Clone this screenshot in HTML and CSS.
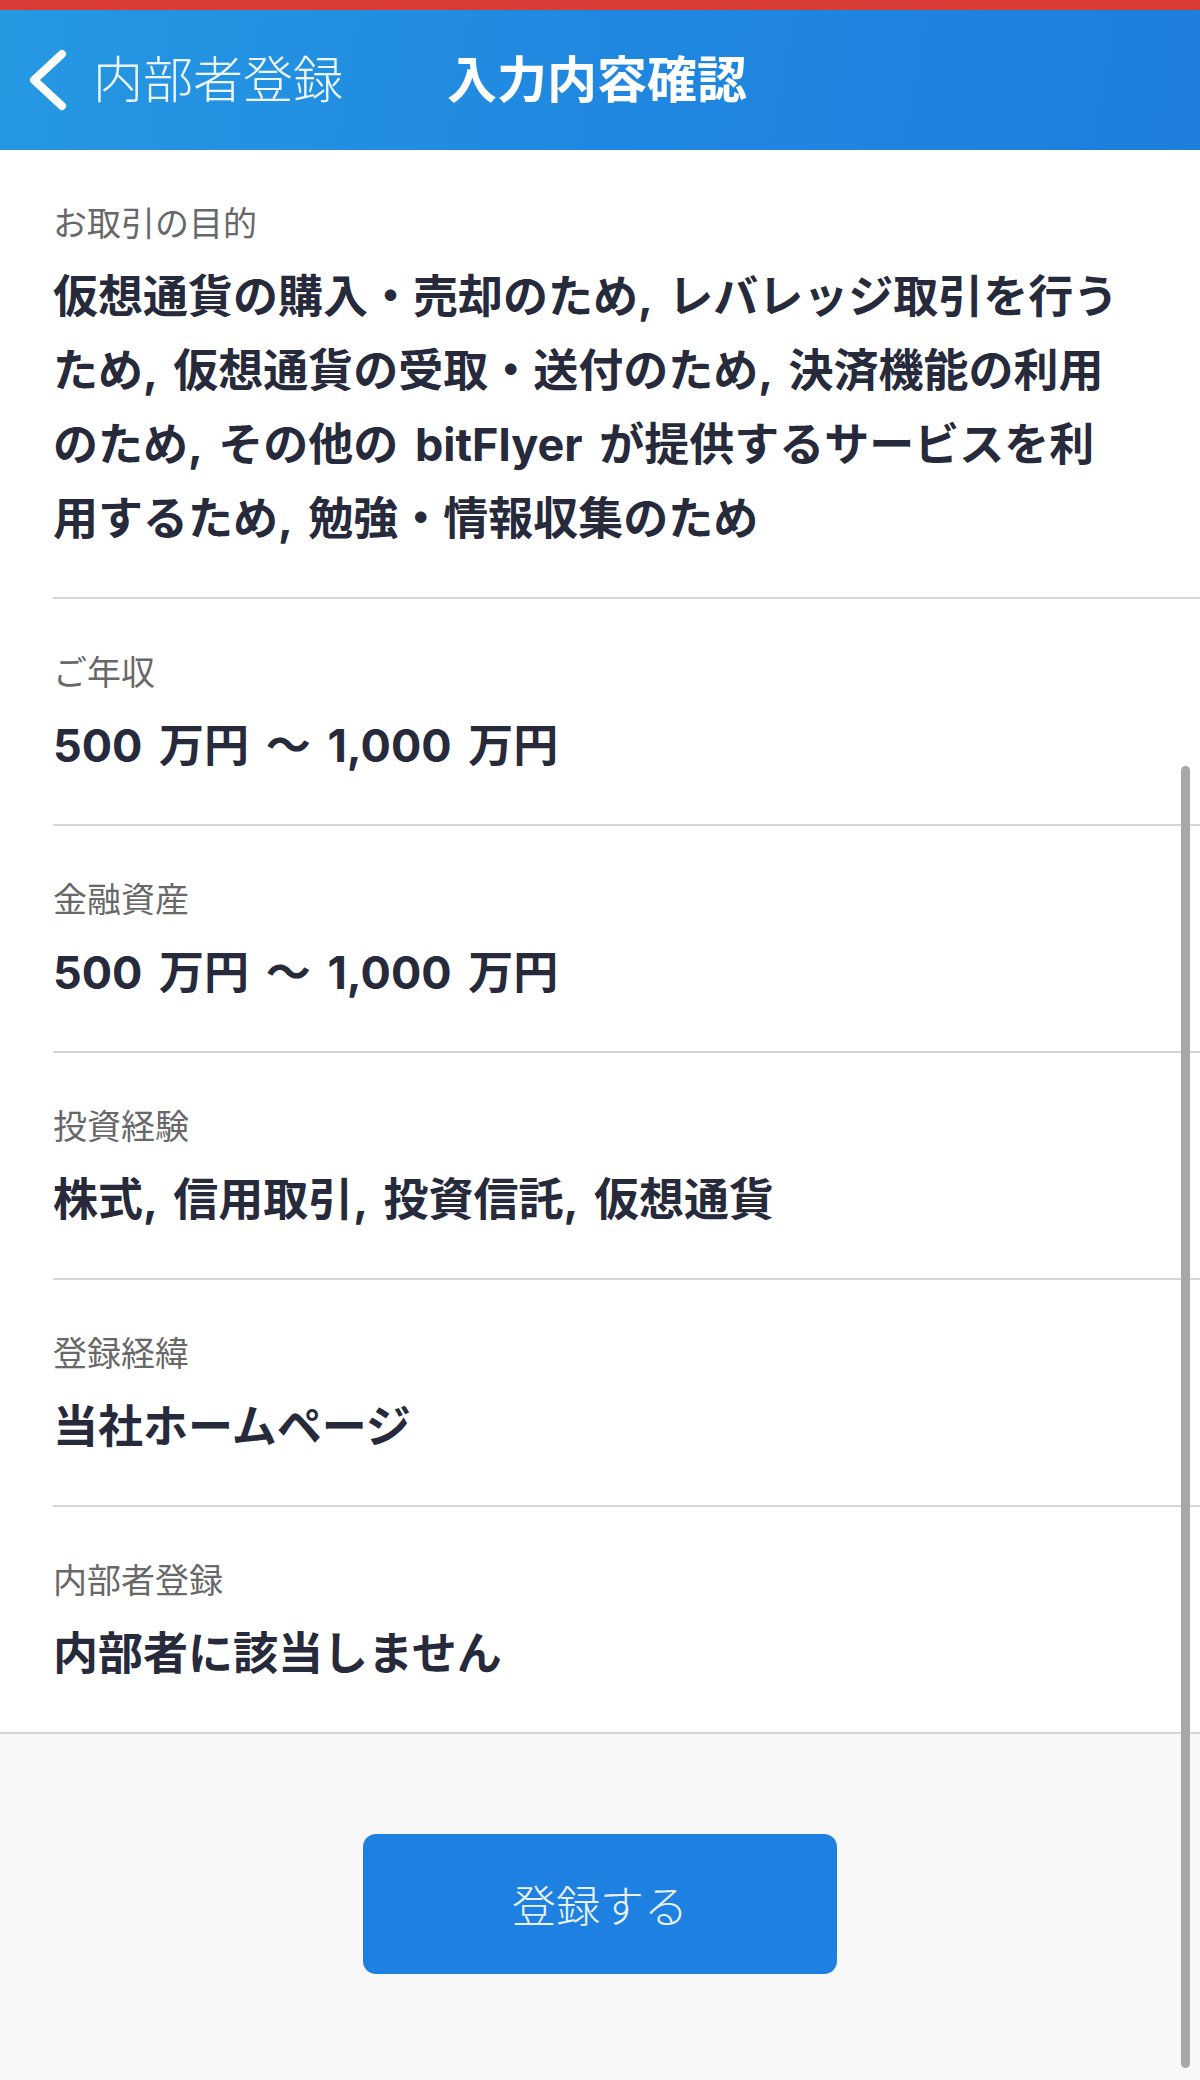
FILE: index.html
```html
<!DOCTYPE html>
<html lang="ja">
<head>
    <meta charset="UTF-8">
    <meta name="viewport" content="width=device-width, initial-scale=1.0">
    <title>入力内容確認</title>
    <link rel="stylesheet" href="styles.css">
</head>
<body>
    <div class="statusbar"></div>

    <header class="navbar">
        <a class="back" href="#">
            <svg class="back-icon" width="40" height="64" viewBox="0 0 40 64">
                <path d="M34 6 L6 32 L34 58" fill="none" stroke="#fff" stroke-width="8" stroke-linecap="round" stroke-linejoin="round"/>
            </svg>
            <span>内部者登録</span>
        </a>
        <h1 class="title">入力内容確認</h1>
    </header>

    <main class="list">
        <div class="item">
            <div class="label">お取引の目的</div>
            <div class="value">仮想通貨の購入・売却のため, レバレッジ取引を行うため, 仮想通貨の受取・送付のため, 決済機能の利用のため, その他の bitFlyer が提供するサービスを利用するため, 勉強・情報収集のため</div>
        </div>
        <div class="item">
            <div class="label">ご年収</div>
            <div class="value">500 万円 〜 1,000 万円</div>
        </div>
        <div class="item">
            <div class="label">金融資産</div>
            <div class="value">500 万円 〜 1,000 万円</div>
        </div>
        <div class="item">
            <div class="label">投資経験</div>
            <div class="value">株式, 信用取引, 投資信託, 仮想通貨</div>
        </div>
        <div class="item">
            <div class="label">登録経緯</div>
            <div class="value">当社ホームページ</div>
        </div>
        <div class="item">
            <div class="label">内部者登録</div>
            <div class="value">内部者に該当しません</div>
        </div>
    </main>

    <footer class="actions">
        <button type="submit" class="submit">登録する</button>
    </footer>

    <div class="scrollbar"></div>
</body>
</html>
```

FILE: styles.css
```css
body {
    font-family: Inter, "Noto Sans CJK JP", sans-serif;
    background-color: #fff;
    color: #262a3b; /* dark navy text */
    margin: 0;
    padding: 0;
    width: 1200px;
    min-height: 2080px;
    display: flex;
    flex-direction: column;
    position: relative;
    overflow: hidden;
}
.statusbar {
    height: 10px;
    background-color: #d93b36;
}
.navbar {
    height: 140px;
    display: flex;
    align-items: center;
    padding-left: 28px;
    background: linear-gradient(100deg, #2698e2 0%, #2088e0 50%, #1e7fdd 100%);
    color: #fff;
}
.back {
    display: flex;
    align-items: center;
    gap: 25px;
    color: #eef6fd;
    text-decoration: none;
    font-size: 50px;
    font-weight: 300;
    line-height: 64px;
}
.back-icon {
    display: block;
}
.title {
    margin: 0 0 0 104px;
    font-size: 50px;
    font-weight: 700;
    line-height: 64px;
}
.list {
    background-color: #fff;
}
.item {
    margin-left: 53px;
    padding: 49px 79px 41px 0;
    border-bottom: 2px solid #d6d6d6; /* indented separator */
}
.item:last-child {
    border-bottom: none;
}
.label {
    font-size: 34px;
    line-height: 50px;
    color: #686868;
    margin-bottom: 11px;
}
.value {
    font-size: 45px;
    font-weight: 700;
    line-height: 74px;
    word-spacing: 6px;
}
.actions {
    flex: 1;
    background-color: #f8f8f8;
    border-top: 2px solid #d6d6d6;
    display: flex;
    justify-content: center;
    align-items: flex-start;
    padding-top: 100px;
}
.submit {
    width: 474px;
    height: 140px;
    border: none;
    border-radius: 13px;
    background-color: #1e80e0;
    color: #eaf3fc;
    font-family: "Noto Sans CJK JP", sans-serif;
    font-size: 44px;
    font-weight: 300;
    cursor: pointer;
}
.scrollbar {
    position: absolute;
    left: 1181px;
    top: 766px;
    width: 9px;
    height: 1302px;
    border-radius: 5px;
    background-color: #a7a7a7;
}
```
